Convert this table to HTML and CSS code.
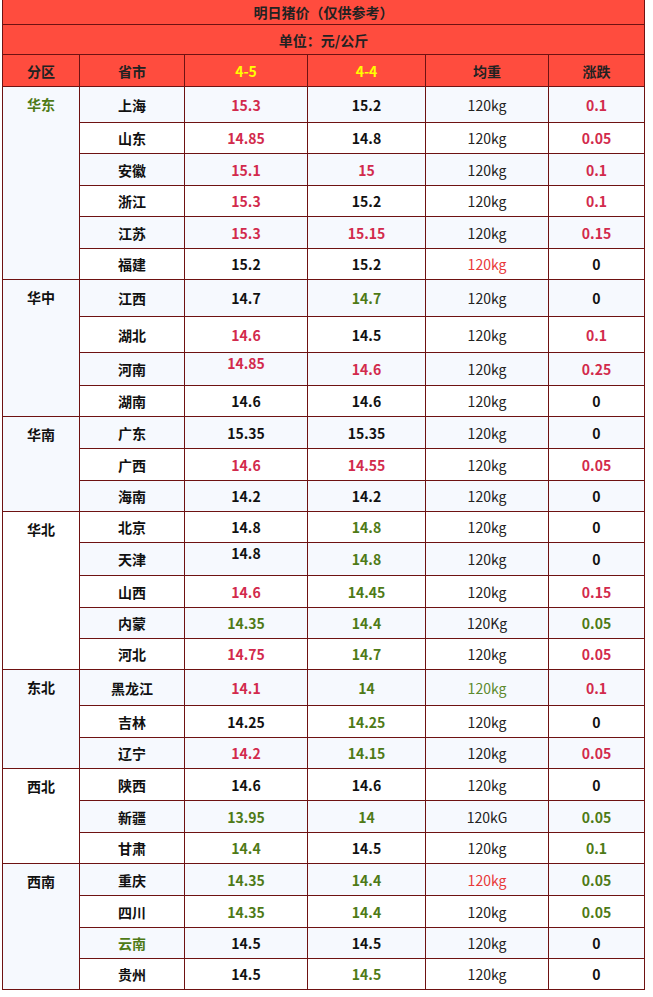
FILE: index.html
```html
<!DOCTYPE html>
<html lang="zh-CN">
<head>
<meta charset="utf-8">
<title>明日猪价</title>
<link rel="stylesheet" href="styles.css">
</head>
<body>
<table class="price">
<colgroup>
<col class="c1"><col class="c2"><col class="c3"><col class="c4"><col class="c5"><col class="c6">
</colgroup>
<thead>
<tr class="title"><td colspan="6">明日猪价（仅供参考）</td></tr>
<tr class="unit"><td colspan="6">单位：元/公斤</td></tr>
<tr class="head"><td>分区</td><td>省市</td><td class="y">4-5</td><td class="y">4-4</td><td>均重</td><td>涨跌</td></tr>
</thead>
<tbody>
<tr class="t"><td class="region g" rowspan="6">华东</td><td>上海</td><td class="r">15.3</td><td>15.2</td><td class="w">120kg</td><td class="r">0.1</td></tr>
<tr class="s"><td>山东</td><td class="r">14.85</td><td>14.8</td><td class="w">120kg</td><td class="r">0.05</td></tr>
<tr><td>安徽</td><td class="r">15.1</td><td class="r">15</td><td class="w">120kg</td><td class="r">0.1</td></tr>
<tr class="s"><td>浙江</td><td class="r">15.3</td><td>15.2</td><td class="w">120kg</td><td class="r">0.1</td></tr>
<tr><td>江苏</td><td class="r">15.3</td><td class="r">15.15</td><td class="w">120kg</td><td class="r">0.15</td></tr>
<tr class="s"><td>福建</td><td>15.2</td><td>15.2</td><td class="w wr">120kg</td><td>0</td></tr>
<tr class="t37"><td class="region" rowspan="4">华中</td><td>江西</td><td>14.7</td><td class="g">14.7</td><td class="w">120kg</td><td>0</td></tr>
<tr class="t"><td>湖北</td><td class="r">14.6</td><td>14.5</td><td class="w">120kg</td><td class="r">0.1</td></tr>
<tr><td>河南</td><td class="r hi">14.85</td><td class="r">14.6</td><td class="w">120kg</td><td class="r">0.25</td></tr>
<tr class="s"><td>湖南</td><td>14.6</td><td>14.6</td><td class="w">120kg</td><td>0</td></tr>
<tr><td class="region" rowspan="3">华南</td><td>广东</td><td>15.35</td><td>15.35</td><td class="w">120kg</td><td>0</td></tr>
<tr><td>广西</td><td class="r">14.6</td><td class="r">14.55</td><td class="w">120kg</td><td class="r">0.05</td></tr>
<tr class="s"><td>海南</td><td>14.2</td><td>14.2</td><td class="w">120kg</td><td>0</td></tr>
<tr class="s"><td class="region" rowspan="5">华北</td><td>北京</td><td>14.8</td><td class="g">14.8</td><td class="w">120kg</td><td>0</td></tr>
<tr><td>天津</td><td class="hi">14.8</td><td class="g">14.8</td><td class="w">120kg</td><td>0</td></tr>
<tr><td>山西</td><td class="r">14.6</td><td class="g">14.45</td><td class="w">120kg</td><td class="r">0.15</td></tr>
<tr class="s"><td>内蒙</td><td class="g">14.35</td><td class="g">14.4</td><td class="w">120Kg</td><td class="g">0.05</td></tr>
<tr class="s"><td>河北</td><td class="r">14.75</td><td class="g">14.7</td><td class="w">120kg</td><td class="r">0.05</td></tr>
<tr class="t"><td class="region" rowspan="3">东北</td><td>黑龙江</td><td class="r">14.1</td><td class="g">14</td><td class="w wg">120kg</td><td class="r">0.1</td></tr>
<tr><td>吉林</td><td>14.25</td><td class="g">14.25</td><td class="w">120kg</td><td>0</td></tr>
<tr class="s"><td>辽宁</td><td class="r">14.2</td><td class="g">14.15</td><td class="w">120kg</td><td class="r">0.05</td></tr>
<tr><td class="region" rowspan="3">西北</td><td>陕西</td><td>14.6</td><td>14.6</td><td class="w">120kg</td><td>0</td></tr>
<tr><td>新疆</td><td class="g">13.95</td><td class="g">14</td><td class="w">120kG</td><td class="g">0.05</td></tr>
<tr class="s"><td>甘肃</td><td class="g">14.4</td><td>14.5</td><td class="w">120kg</td><td class="g">0.1</td></tr>
<tr><td class="region" rowspan="4">西南</td><td>重庆</td><td class="g">14.35</td><td class="g">14.4</td><td class="w wr">120kg</td><td class="g">0.05</td></tr>
<tr><td>四川</td><td class="g">14.35</td><td class="g">14.4</td><td class="w">120kg</td><td class="g">0.05</td></tr>
<tr class="s"><td class="g">云南</td><td>14.5</td><td>14.5</td><td class="w">120kg</td><td>0</td></tr>
<tr class="s"><td>贵州</td><td>14.5</td><td class="g">14.5</td><td class="w">120kg</td><td>0</td></tr>
</tbody>
</table>
</body>
</html>
```
FILE: styles.css
```css
html, body {
  margin: 0;
  padding: 0;
  background: #ffffff;
}
body {
  padding-left: 2px;
}
.price {
  border-collapse: collapse;
  table-layout: fixed;
  width: 643px;
  font-family: "Noto Sans CJK SC", "Microsoft YaHei", sans-serif;
  font-size: 14px;
  font-weight: bold;
  color: #111111;
  border: 1px solid #6e1212;
  border-top: 0;
}
.c1 { width: 77px; }
.c2 { width: 105px; }
.c3 { width: 123px; }
.c4 { width: 118px; }
.c5 { width: 123px; }
.c6 { width: 96px; }
.price td {
  border: 1px solid #6e1212;
  padding: 0;
  text-align: center;
  vertical-align: middle;
  line-height: 20px;
}
.price thead td {
  background: #ff4c3e;
  color: #222222;
}
.price .title td {
  border-top: 0;
  height: 24px;
}
.price .unit td { height: 29px; }
.price .head td { height: 31px; }
.price .head td.y { color: #ffff00; }
.price tbody tr { height: 32px; }
.price tbody tr.s { height: 31px; }
.price tbody tr.t { height: 36px; }
.price tbody tr.t37 { height: 37px; }
.price tbody tr:nth-child(odd) td { background: #f6f9fe; }
.price tbody tr:nth-child(even) td { background: #ffffff; }
.price tbody td.region {
  background: #f6f9fe;
  vertical-align: top;
  padding-top: 7px;
}
.price .r { color: #d22a4c; }
.price .g { color: #4e7a16; }
.price .w {
  font-weight: normal;
  color: #222222;
}
.price .w.wr { color: #e8393a; }
.price .w.wg { color: #5d8a2e; }
.price .hi { padding-bottom: 12px; }
```
